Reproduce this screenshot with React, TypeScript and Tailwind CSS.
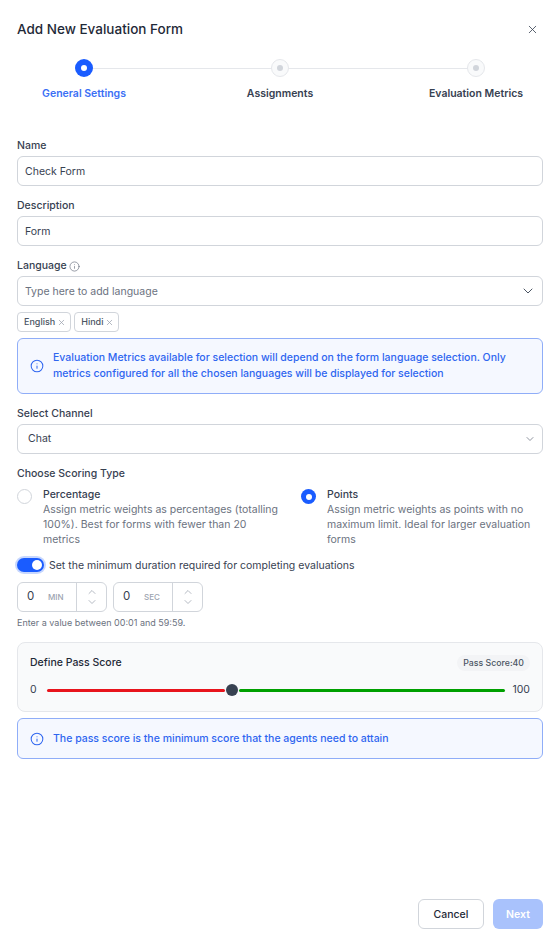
import { ChevronDown, ChevronUp, Info, X } from 'lucide-react';

function Step({ label, active }: { label: string; active?: boolean }) {
    return (
        <div className="flex w-[100px] flex-col items-center">
            {active ? (
                <div className="flex h-[18px] w-[18px] items-center justify-center rounded-full bg-[#1a5cff]">
                    <div className="h-[6px] w-[6px] rounded-full bg-white" />
                </div>
            ) : (
                <div className="flex h-[18px] w-[18px] items-center justify-center rounded-full border border-[#e5e7eb] bg-[#f9fafb]">
                    <div className="h-[6px] w-[6px] rounded-full bg-[#d1d5db]" />
                </div>
            )}
            <div className={`mt-[9px] whitespace-nowrap text-[10.5px] leading-[16px] font-semibold ${active ? 'text-[#3b6ff5]' : 'text-[#374151]'}`}>
                {label}
            </div>
        </div>
    );
}

function Field({ label, value }: { label: string; value: string }) {
    return (
        <div>
            <div className="text-[10.5px] leading-[16px] font-medium text-[#374151]">{label}</div>
            <div className="mt-[2px] flex h-[30px] items-center rounded-[6px] border border-[#d1d5db] bg-white px-[7px] pt-[2px] text-[10.5px] text-[#374151]">
                {value}
            </div>
        </div>
    );
}

function Chip({ label }: { label: string }) {
    return (
        <div className="flex h-5 items-center gap-[2px] rounded-[4px] border border-[#d1d5db] bg-white pr-[4px] pl-[6px] text-[9px] font-medium text-[#4b5563]">
            {label}
            <X className="h-[9px] w-[9px] text-[#9ca3af]" strokeWidth={2} />
        </div>
    );
}

function Notice({ children, className }: { children: React.ReactNode; className: string }) {
    return (
        <div className={`flex items-center gap-[9px] rounded-[6px] border border-[#8fadf8] bg-[#f5f8ff] px-3 text-[10.5px] leading-[16px] font-medium text-[#2f66f0] ${className}`}>
            <Info className="h-[14px] w-[14px] shrink-0" strokeWidth={1.75} />
            <div>{children}</div>
        </div>
    );
}

function Radio({ title, text, checked, className }: { title: string; text: React.ReactNode; checked?: boolean; className: string }) {
    return (
        <div className={`flex gap-[11px] ${className}`}>
            {checked ? (
                <div className="mt-[2px] flex h-[15px] w-[15px] shrink-0 items-center justify-center rounded-full bg-[#1a5cff]">
                    <div className="h-[6px] w-[6px] rounded-full bg-white" />
                </div>
            ) : (
                <div className="mt-[2px] h-[15px] w-[15px] shrink-0 rounded-full border border-[#d1d5db] bg-white" />
            )}
            <div>
                <div className="text-[10.5px] leading-[15px] font-medium text-[#374151]">{title}</div>
                <div className="whitespace-nowrap text-[10.5px] leading-[15px] text-[#6b7280]">{text}</div>
            </div>
        </div>
    );
}

function TimeBox({ unit }: { unit: string }) {
    return (
        <div className="flex h-[30px] w-[90px] items-center rounded-[6px] border border-[#d1d5db] bg-white">
            <div className="w-[23px] pl-[9px] text-[11.5px] text-[#374151]">0</div>
            <div className="w-[35px] pl-[7px] text-[8px] font-medium text-[#9ca3af]">{unit}</div>
            <div className="flex h-full flex-1 flex-col items-center justify-center border-l border-[#d1d5db] text-[#9ca3af]">
                <ChevronUp className="h-[12px] w-[12px]" strokeWidth={1.5} />
                <ChevronDown className="-mt-[2px] h-[12px] w-[12px]" strokeWidth={1.5} />
            </div>
        </div>
    );
}

export default function App() {
    return (
        <div className="flex h-[939px] w-[556px] flex-col bg-white pr-[13px] pl-[17px] font-['Inter',sans-serif]">
            <div className="flex h-[57px] items-center justify-between pt-[2px] pr-[4px]">
                <h1 className="text-[13.5px] font-medium text-[#1f2937]">Add New Evaluation Form</h1>
                <X className="h-[13px] w-[13px] text-[#374151]" strokeWidth={1.5} />
            </div>

            {/* stepper */}
            <div className="relative mt-[2px] flex justify-between px-[17px]">
                <div className="absolute top-[9px] right-[67px] left-[67px] h-px bg-[#e5e7eb]" />
                <div className="relative z-10"><Step label="General Settings" active /></div>
                <div className="relative z-10"><Step label="Assignments" /></div>
                <div className="relative z-10"><Step label="Evaluation Metrics" /></div>
            </div>

            <div className="mt-[36px] flex flex-col">
                <Field label="Name" value="Check Form" />
                <div className="mt-[12px]"><Field label="Description" value="Form" /></div>

                <div className="mt-[12px] flex items-center gap-[2px] text-[10.5px] leading-[16px] font-medium text-[#374151]">
                    Language
                    <Info className="h-[11px] w-[11px] text-[#6b7280]" strokeWidth={1.5} />
                </div>
                <div className="mt-[2px] flex h-[30px] items-center justify-between rounded-[6px] border border-[#d1d5db] bg-white pr-[6px] pl-[7px] text-[10.5px] text-[#6b7280]">
                    <span className="pt-[2px]">Type here to add language</span>
                    <ChevronDown className="h-[16px] w-[16px] text-[#4b5563]" strokeWidth={1.5} />
                </div>
                <div className="mt-[6px] flex gap-[3px]">
                    <Chip label="English" />
                    <Chip label="Hindi" />
                </div>
                <Notice className="mt-[6px] h-[56px]">
                    Evaluation Metrics available for selection will depend on the form language selection. Only metrics configured for all the chosen languages will be displayed for selection
                </Notice>

                <div className="mt-[12px] text-[10.5px] leading-[16px] font-medium text-[#374151]">Select Channel</div>
                <div className="mt-[2px] flex h-[30px] items-center justify-between rounded-[6px] border border-[#d1d5db] bg-white pr-[6px] pl-[10px] text-[10.5px] text-[#374151]">
                    Chat
                    <ChevronDown className="h-[12px] w-[12px] text-[#6b7280]" strokeWidth={1.5} />
                </div>

                <div className="mt-[12px] text-[10.5px] leading-[16px] font-medium text-[#374151]">Choose Scoring Type</div>
                <div className="mt-[5px] flex">
                    <Radio
                        className="w-[284px]"
                        title="Percentage"
                        text={<>Assign metric weights as percentages (totalling<br />100%). Best for forms with fewer than 20<br />metrics</>}
                    />
                    <Radio
                        className="flex-1"
                        checked
                        title="Points"
                        text={<>Assign metric weights as points with no<br />maximum limit. Ideal for larger evaluation<br />forms</>}
                    />
                </div>

                <div className="mt-[10px] flex items-center gap-[5px]">
                    <div className="flex h-[14px] w-[27px] items-center justify-end rounded-full bg-[#1a5cff] pr-[2px] shadow-[0_0_0_2px_#c7d7fe]">
                        <div className="h-[10px] w-[10px] rounded-full bg-white" />
                    </div>
                    <div className="pt-[2px] text-[10.5px] leading-[14px] text-[#374151]">Set the minimum duration required for completing evaluations</div>
                </div>

                <div className="mt-[9px] flex gap-[6px]">
                    <TimeBox unit="MIN" />
                    <TimeBox unit="SEC" />
                </div>
                <div className="mt-[4px] text-[9px] leading-[14px] text-[#6b7280]">Enter a value between 00:01 and 59:59.</div>

                {/* pass score */}
                <div className="mt-[12px] h-[70px] rounded-[8px] border border-[#e5e7eb] bg-[#f9fafb] px-3 pt-[12px]">
                    <div className="flex items-center justify-between">
                        <div className="text-[10.5px] leading-[16px] font-medium text-[#1f2937]">Define Pass Score</div>
                        <div className="rounded-full bg-[#f3f4f6] px-[6px] py-[1px] text-[8.75px] leading-[14px] font-medium text-[#4b5563]">Pass Score:40</div>
                    </div>
                    <div className="mt-[11px] flex items-center text-[10.5px] leading-[16px] text-[#374151]">
                        <span className="w-[17px]">0</span>
                        <div className="flex flex-1 items-center">
                            <div className="h-[3px] w-[178px] rounded-full bg-[#e8141c]" />
                            <div className="mx-px h-[12px] w-[12px] rounded-full bg-[#374151]" />
                            <div className="h-[3px] flex-1 rounded-full bg-[#00a000]" />
                        </div>
                        <span className="ml-[7px]">100</span>
                    </div>
                </div>

                <Notice className="mt-[6px] h-[41px]">The pass score is the minimum score that the agents need to attain</Notice>
            </div>

            <div className="mt-auto mb-[10px] flex justify-end gap-[9px]">
                <button className="h-[30px] w-[66px] rounded-[6px] border border-[#d1d5db] bg-white pt-[2px] text-[10.5px] font-medium text-[#1f2937]">Cancel</button>
                <button className="h-[30px] w-[50px] rounded-[6px] bg-[#a9c2fc] pt-[2px] text-[10.5px] font-semibold text-white">Next</button>
            </div>
        </div>
    );
}
